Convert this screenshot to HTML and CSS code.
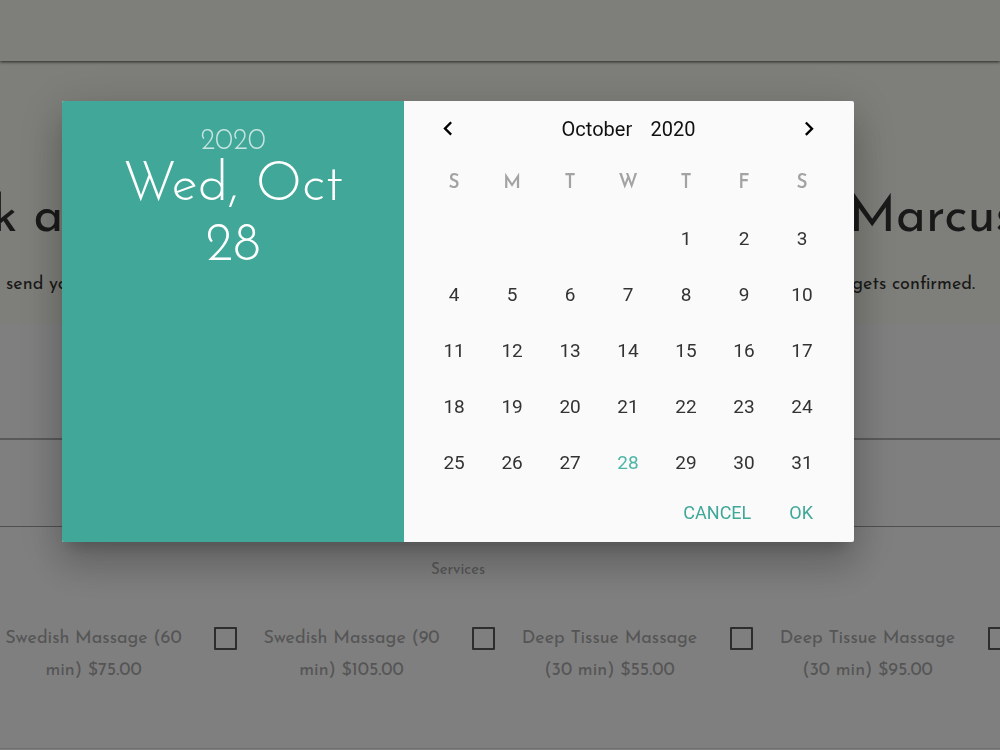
FILE: index.html
```html
<!DOCTYPE html>
<html lang="en">
<head>
    <meta charset="UTF-8">
    <meta name="viewport" content="width=device-width, initial-scale=1.0">
    <title>Marcus</title>
    <link rel="stylesheet" href="styles.css">
</head>
<body>
    <nav class="navbar"></nav>

    <header class="hero">
        <h1><span>k a</span><span>Marcus</span></h1>
        <p><span>send yo</span><span>gets confirmed.</span></p>
    </header>

    <form class="booking">
        <input class="field field-date" type="text" aria-label="Date">
        <input class="field" type="text" aria-label="Time">
        <fieldset>
            <legend>Services</legend>
            <div class="services">
                <label class="service"><input type="checkbox"><span>Swedish Massage (60 min) $75.00</span></label>
                <label class="service"><input type="checkbox"><span>Swedish Massage (90 min) $105.00</span></label>
                <label class="service"><input type="checkbox"><span>Deep Tissue Massage (30 min) $55.00</span></label>
                <label class="service"><input type="checkbox"><span>Deep Tissue Massage (30 min) $95.00</span></label>
                <label class="service"><input type="checkbox" aria-label="Service"></label>
            </div>
        </fieldset>
    </form>

    <div class="overlay">
        <div class="datepicker" role="dialog" aria-label="Date">
            <div class="date-display">
                <span class="year-text">2020</span>
                <span class="date-text">Wed, Oct 28</span>
            </div>
            <div class="calendar">
                <div class="controls">
                    <button class="arrow" type="button" aria-label="Previous month">
                        <svg width="28" height="28" viewBox="0 0 24 24"><path d="M15.41 16.09l-4.58-4.59 4.58-4.59L14 5.5l-6 6 6 6z"/></svg>
                    </button>
                    <div class="selects">
                        <select aria-label="Month"><option>October</option></select>
                        <select aria-label="Year"><option>2020</option></select>
                    </div>
                    <button class="arrow" type="button" aria-label="Next month">
                        <svg width="28" height="28" viewBox="0 0 24 24"><path d="M8.59 16.34l4.58-4.59-4.58-4.59L10 5.75l6 6-6 6z"/></svg>
                    </button>
                </div>
                <table>
                    <thead>
                        <tr><th>S</th><th>M</th><th>T</th><th>W</th><th>T</th><th>F</th><th>S</th></tr>
                    </thead>
                    <tbody>
                        <tr>
                            <td></td><td></td><td></td><td></td>
                            <td><button type="button">1</button></td>
                            <td><button type="button">2</button></td>
                            <td><button type="button">3</button></td>
                        </tr>
                        <tr>
                            <td><button type="button">4</button></td>
                            <td><button type="button">5</button></td>
                            <td><button type="button">6</button></td>
                            <td><button type="button">7</button></td>
                            <td><button type="button">8</button></td>
                            <td><button type="button">9</button></td>
                            <td><button type="button">10</button></td>
                        </tr>
                        <tr>
                            <td><button type="button">11</button></td>
                            <td><button type="button">12</button></td>
                            <td><button type="button">13</button></td>
                            <td><button type="button">14</button></td>
                            <td><button type="button">15</button></td>
                            <td><button type="button">16</button></td>
                            <td><button type="button">17</button></td>
                        </tr>
                        <tr>
                            <td><button type="button">18</button></td>
                            <td><button type="button">19</button></td>
                            <td><button type="button">20</button></td>
                            <td><button type="button">21</button></td>
                            <td><button type="button">22</button></td>
                            <td><button type="button">23</button></td>
                            <td><button type="button">24</button></td>
                        </tr>
                        <tr>
                            <td><button type="button">25</button></td>
                            <td><button type="button">26</button></td>
                            <td><button type="button">27</button></td>
                            <td class="today"><button type="button">28</button></td>
                            <td><button type="button">29</button></td>
                            <td><button type="button">30</button></td>
                            <td><button type="button">31</button></td>
                        </tr>
                    </tbody>
                </table>
                <div class="actions">
                    <button type="button">CANCEL</button>
                    <button type="button">OK</button>
                </div>
            </div>
        </div>
    </div>
</body>
</html>
```
FILE: styles.css
```css
* {
    box-sizing: border-box;
}

body {
    margin: 0;
    min-height: 100vh;
    overflow: hidden;
    background: #fff;
    font-family: 'Josefin Sans', Lato, sans-serif;
    font-size: 18px;
    color: #333;
}

button, select, input {
    margin: 0;
    padding: 0;
    border: 0;
    background: none;
    font: inherit;
    color: inherit;
    appearance: none;
}

button {
    cursor: pointer;
}

.navbar {
    position: relative;
    height: 61px;
    background: #fdfef4;
    box-shadow: 0 1px 3px rgba(0, 0, 0, 0.7);
}

.hero {
    height: 263px;
    padding-top: 124px;
    background: #fdfef4;
}

.hero h1, .hero p {
    display: flex;
    justify-content: space-between;
    margin: 0;
    white-space: nowrap;
}

.hero h1 {
    margin: 0 -16px 0 -8px;
    font-size: 51px;
    font-weight: 400;
    line-height: 68px;
}

.hero p {
    padding: 18px 25px 0 6px;
    line-height: 28px;
}

/* Booking form */
.field {
    display: block;
    width: 100%;
    height: 87px;
    border-bottom: 1px solid #9e9e9e;
}

.field-date {
    height: 116px;
    border-bottom: 2px solid #b4b4b4;
}

fieldset {
    min-width: 0;
    margin: 0;
    padding: 0 0 61px;
    border: 0;
    border-bottom: 1px solid #e0e0e0;
}

legend {
    width: 100%;
    padding: 34px 8.4% 38px 0;
    font-size: 15px;
    line-height: 20px;
    text-align: center;
    color: #aaa;
}

.services {
    display: flex;
    margin-left: -44px;
}

.service {
    display: flex;
    flex: 0 0 258px;
    align-items: flex-start;
    line-height: 32px;
    text-align: center;
    color: #aaa;
}

.service input {
    flex: none;
    width: 23px;
    height: 23px;
    margin-top: 8px;
    border: 2px solid #5a5a5a;
    border-radius: 1px;
}

.service span {
    flex: 1;
    padding: 4px 26px 0 20px;
}

/* Date picker */
.overlay {
    position: fixed;
    inset: 0;
    padding: 101px 14.6% 0 6.2%;
    background: rgba(0, 0, 0, 0.5);
}

.datepicker {
    display: flex;
    border-radius: 2px;
    overflow: hidden;
    background: #fafafa;
    box-shadow: 0 24px 38px 3px rgba(0, 0, 0, 0.14), 0 9px 46px 8px rgba(0, 0, 0, 0.12), 0 11px 15px -7px rgba(0, 0, 0, 0.2);
}

.date-display {
    display: flex;
    flex: none;
    flex-direction: column;
    width: 43.2%;
    padding: 26px 52px;
    background: #40a799;
    color: #fff;
    font-weight: 300;
    text-align: center;
}

.year-text {
    font-size: 29px;
    line-height: 30px;
    opacity: 0.7;
}

.date-text {
    font-size: 54px;
    line-height: 60px;
}

.calendar {
    flex: 1;
    padding: 0 23px 12px 21px;
    font-family: Roboto, sans-serif;
}

.controls {
    display: flex;
    align-items: center;
    justify-content: space-between;
    height: 54px;
    padding: 2px 8px 0 9px;
}

.arrow {
    height: 28px;
}

.arrow svg {
    display: block;
    fill: #000;
}

.selects {
    display: flex;
    gap: 18px;
    font-size: 20px;
    color: #111;
}

table {
    width: 100%;
    border-collapse: collapse;
    table-layout: fixed;
}

th, td {
    height: 56px;
    padding: 0;
    text-align: center;
    vertical-align: middle;
}

th {
    height: 55px;
    padding-top: 2px;
    font-family: 'Josefin Sans', Lato, sans-serif;
    font-size: 19px;
    font-weight: 600;
    color: #a3a3a3;
}

td button {
    width: 100%;
    height: 56px;
    font-size: 19px;
    color: #333;
}

.today button {
    color: #4db6a6;
}

.actions {
    display: flex;
    justify-content: flex-end;
    gap: 38px;
    padding: 5px 18px 0 0;
    font-size: 18px;
    line-height: 35px;
    color: #40a799;
}
```
